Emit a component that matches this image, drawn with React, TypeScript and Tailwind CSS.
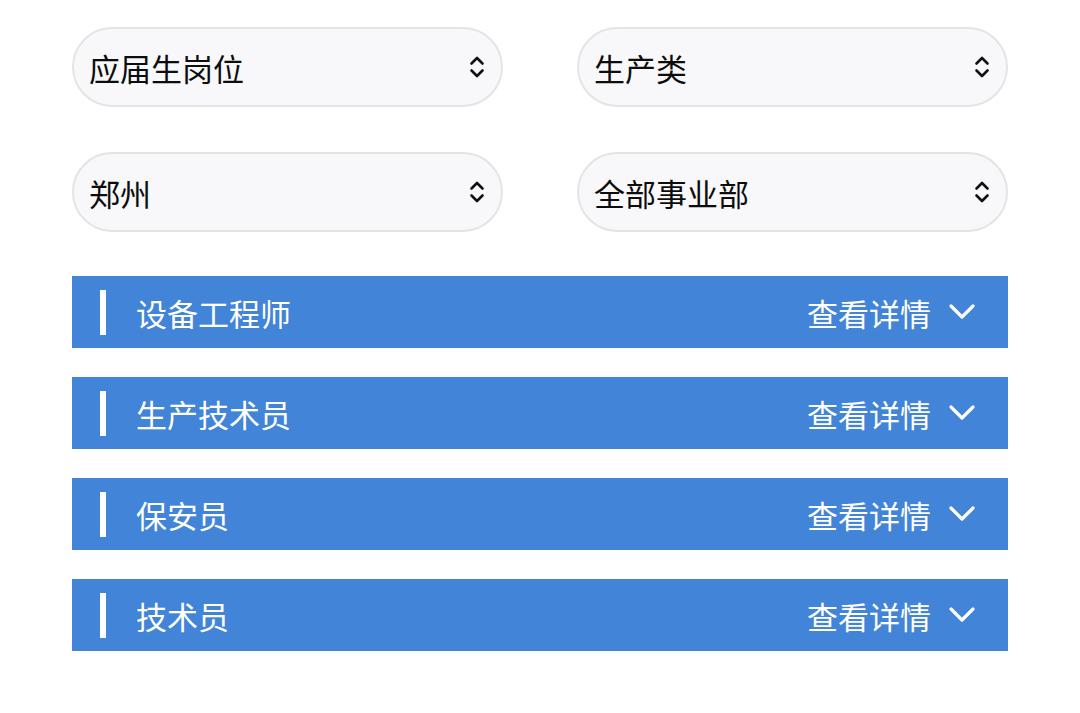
const selects = ["应届生岗位", "生产类", "郑州", "全部事业部"];
const jobs = ["设备工程师", "生产技术员", "保安员", "技术员"];

function UpDown() {
  return (
    <svg width="20" height="26" viewBox="0 0 20 26" fill="none" stroke="#111" strokeWidth="2.6" strokeLinecap="round" strokeLinejoin="round">
      <path d="M4.5 9.5 L10 4 L15.5 9.5" />
      <path d="M4.5 16.5 L10 22 L15.5 16.5" />
    </svg>
  );
}

function ChevronDown() {
  return (
    <svg width="28" height="18" viewBox="0 0 28 18" fill="none" stroke="#fff" strokeWidth="3.2" strokeLinecap="round" strokeLinejoin="round">
      <path d="M3 3 L14 14 L25 3" />
    </svg>
  );
}

export default function App() {
  return (
    <div
      className="w-[1080px] h-[713px] bg-white pt-[27px] px-[72px]"
      style={{ fontFamily: '"Noto Sans CJK SC", "Noto Sans", sans-serif' }}
    >
      <div className="grid grid-cols-2 gap-x-[74px] gap-y-[45px]">
        {selects.map((s) => (
          <div
            key={s}
            className="h-[80px] rounded-full border-2 border-[#e4e4e6] bg-[#f8f8fa] flex items-center justify-between pl-[15px] pr-[14px]"
          >
            <span className="text-[31px] text-[#0d0d0d] leading-none">{s}</span>
            <UpDown />
          </div>
        ))}
      </div>

      <div className="mt-[44px] flex flex-col gap-[29px]">
        {jobs.map((j) => (
          <div key={j} className="h-[72px] bg-[#4284d8] flex items-center pl-[28px] pr-[32px]">
            <div className="w-[6px] h-[45px] bg-white" />
            <span className="ml-[30px] text-[31px] text-white leading-none">{j}</span>
            <span className="ml-auto text-[31px] text-white leading-none">查看详情</span>
            <span className="ml-[17px] flex items-center">
              <ChevronDown />
            </span>
          </div>
        ))}
      </div>
    </div>
  );
}
